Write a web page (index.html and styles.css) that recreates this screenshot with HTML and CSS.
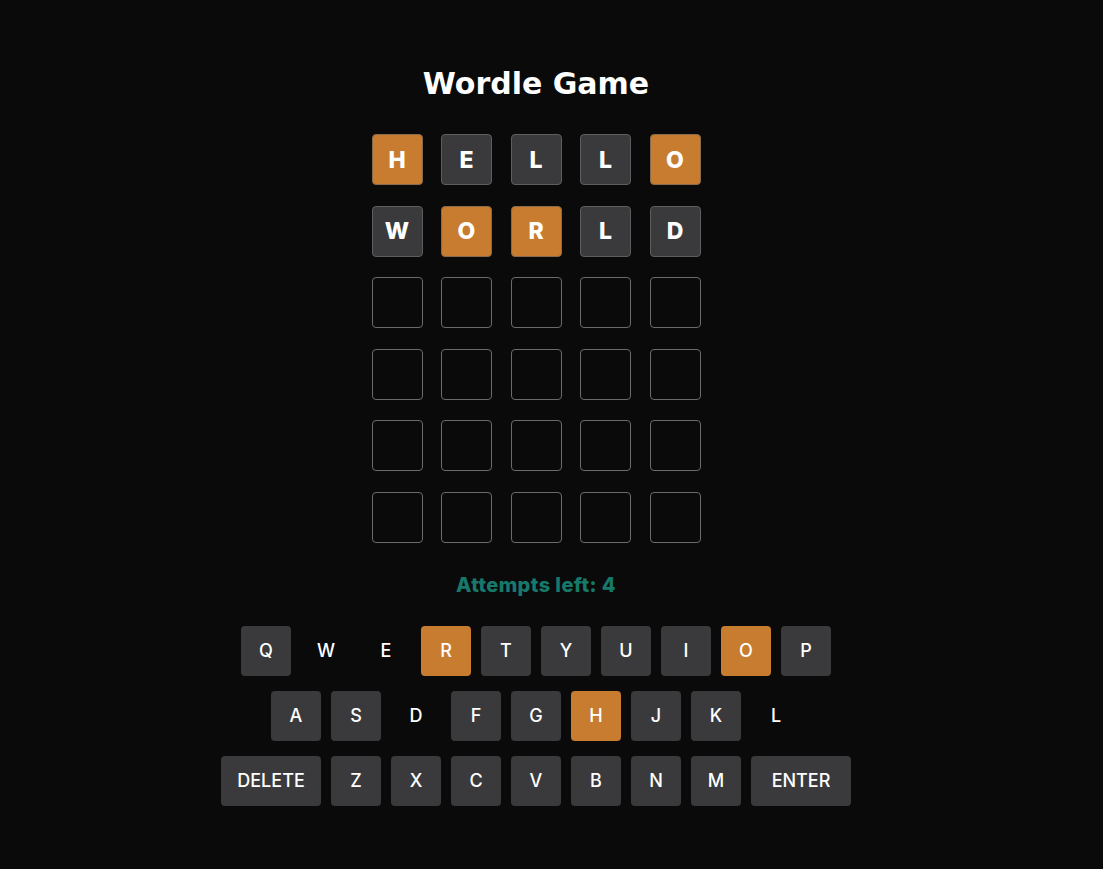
FILE: index.html
```html
<!DOCTYPE html>
<html lang="en">
<head>
<meta charset="utf-8">
<title>Wordle Game</title>
<link rel="stylesheet" href="styles.css">
</head>
<body>
<main class="app">
  <h1 class="title">Wordle Game</h1>
  <div class="board">
    <div class="tile present">H</div>
    <div class="tile absent">E</div>
    <div class="tile absent">L</div>
    <div class="tile absent">L</div>
    <div class="tile present">O</div>

    <div class="tile absent">W</div>
    <div class="tile present">O</div>
    <div class="tile present">R</div>
    <div class="tile absent">L</div>
    <div class="tile absent">D</div>

    <div class="tile"></div><div class="tile"></div><div class="tile"></div><div class="tile"></div><div class="tile"></div>
    <div class="tile"></div><div class="tile"></div><div class="tile"></div><div class="tile"></div><div class="tile"></div>
    <div class="tile"></div><div class="tile"></div><div class="tile"></div><div class="tile"></div><div class="tile"></div>
    <div class="tile"></div><div class="tile"></div><div class="tile"></div><div class="tile"></div><div class="tile"></div>
  </div>
  <p class="attempts">Attempts left: 4</p>
  <div class="keyboard">
    <div class="krow">
      <button class="key">Q</button>
      <button class="key used">W</button>
      <button class="key used">E</button>
      <button class="key hit">R</button>
      <button class="key">T</button>
      <button class="key">Y</button>
      <button class="key">U</button>
      <button class="key">I</button>
      <button class="key hit">O</button>
      <button class="key">P</button>
    </div>
    <div class="krow">
      <button class="key">A</button>
      <button class="key">S</button>
      <button class="key used">D</button>
      <button class="key">F</button>
      <button class="key">G</button>
      <button class="key hit">H</button>
      <button class="key">J</button>
      <button class="key">K</button>
      <button class="key used">L</button>
    </div>
    <div class="krow">
      <button class="key wide">DELETE</button>
      <button class="key">Z</button>
      <button class="key">X</button>
      <button class="key">C</button>
      <button class="key">V</button>
      <button class="key">B</button>
      <button class="key">N</button>
      <button class="key">M</button>
      <button class="key wide">ENTER</button>
    </div>
  </div>
</main>
</body>
</html>
```
FILE: styles.css
```css
html, body {
  margin: 0;
  padding: 0;
  background: #0a0a0a;
  min-height: 100%;
}

body {
  font-family: Inter, "Liberation Sans", sans-serif;
  color: #ffffff;
}

.app {
  display: flex;
  flex-direction: column;
  align-items: center;
  padding: 66px 31px 0 0;
}

.title {
  margin: 0;
  font-family: "DejaVu Sans", Inter, sans-serif;
  font-size: 30px;
  line-height: 36px;
  font-weight: 700;
}

.board {
  margin-top: 32px;
  display: grid;
  grid-template-columns: repeat(5, 51px);
  grid-auto-rows: 51px;
  column-gap: 18.5px;
  row-gap: 20.6px;
}

.tile {
  box-sizing: border-box;
  border: 1px solid #6b6b6b;
  border-radius: 4px;
  display: flex;
  align-items: center;
  justify-content: center;
  font-size: 23px;
  font-weight: 800;
  color: #ffffff;
}

.tile.absent {
  background: #3a3a3c;
  border-color: #5e5e60;
}

.tile.present {
  background: #c87c2f;
  border-color: #8a6a4c;
}

.attempts {
  margin: 30px 0 0;
  font-size: 20px;
  line-height: 24px;
  font-weight: 800;
  color: #16796b;
  letter-spacing: 0.4px;
}

.keyboard {
  margin-top: 29px;
  display: flex;
  flex-direction: column;
  align-items: center;
  gap: 15px;
}

.krow {
  display: flex;
  gap: 10px;
}

.key {
  box-sizing: border-box;
  width: 50px;
  height: 50px;
  border: none;
  border-radius: 4px;
  background: #3a3a3c;
  color: #ffffff;
  font-family: Inter, "Liberation Sans", sans-serif;
  font-size: 18px;
  font-weight: 500;
  padding: 0;
  display: flex;
  align-items: center;
  justify-content: center;
}

.key.wide {
  width: 100px;
}

.key.used {
  background: transparent;
}

.key.hit {
  background: #c87c2f;
}
```
